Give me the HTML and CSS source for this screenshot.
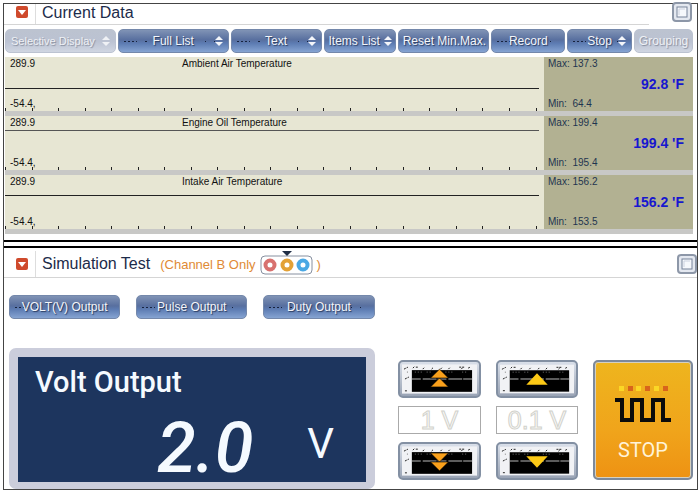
FILE: index.html
```html
<!DOCTYPE html>
<html lang="en">
<head>
    <meta charset="utf-8">
    <title>Current Data</title>
    <link rel="stylesheet" href="styles.css">
</head>
<body>
    <svg class="defs" aria-hidden="true">
        <symbol id="collapse" viewBox="0 0 12 12">
            <rect width="12" height="12" rx="2" fill="#cf4a2c"/>
            <path d="M2 4h8L6 9z" fill="#fff"/>
        </symbol>
        <symbol id="updown" viewBox="0 0 8 12">
            <path d="M4 1L8 5H0zM0 7h8L4 11z" fill="currentColor"/>
        </symbol>
        <symbol id="window" viewBox="0 0 20 20">
            <rect x="1" y="1" width="18" height="18" rx="3" fill="#e4e8f0" stroke="#8d97a8" stroke-width="2"/>
            <rect x="5" y="5" width="10" height="10" fill="#f6f8fc" stroke="#77839a"/>
            <path d="M7 13V7h6" fill="none" stroke="#ccd2e0"/>
        </symbol>
        <symbol id="ticks" viewBox="0 0 539 3" preserveAspectRatio="none">
            <path d="M0 0h1v3h-1zM27 0h1v3h-1zM53 0h1v3h-1zM80 0h1v3h-1zM106 0h1v3h-1zM133 0h1v3h-1zM159 0h1v3h-1zM186 0h1v3h-1zM212 0h1v3h-1zM239 0h1v3h-1zM265 0h1v3h-1zM292 0h1v3h-1zM318 0h1v3h-1zM345 0h1v3h-1zM371 0h1v3h-1zM398 0h1v3h-1zM424 0h1v3h-1zM451 0h1v3h-1zM477 0h1v3h-1zM504 0h1v3h-1zM531 0h1v3h-1z" fill="#222"/>
        </symbol>
        <!-- speckled key face behind the step arrows -->
        <symbol id="keyface" viewBox="0 0 76 30">
            <rect width="76" height="30" fill="#f1f2f5"/>
            <rect x="10" y="6" width="61" height="22" fill="#000"/>
            <path d="M10 15h61" stroke="#bbb" stroke-dasharray="9 2 14 1"/>
            <path d="M2 5l4-2M3 15l4-2M11 4l2-2M14 3h3M21 5l2-2M30 5l2-2M39 5l2-2M47 5l2-2M58 3h5M60 5l2-2M67 4l2-1M3 27h2" stroke="#222" stroke-dasharray="2 1"/>
            <path d="M5 8h3M13 8h7M25 8h6M44 8h7M61 8h6" stroke="#777" stroke-dasharray="1 2"/>
        </symbol>
    </svg>

    <main class="screen">
        <section class="panel">
            <header class="panel-head data-head">
                <span class="toggle"><svg width="12" height="12"><use href="#collapse"/></svg></span>
                <h2>Current Data</h2>
                <svg class="window" width="20" height="20"><use href="#window"/></svg>
            </header>
            <hr class="rule short">

            <nav class="toolbar">
                <button class="btn start small" disabled><span>Selective Display</span><svg width="8" height="12"><use href="#updown"/></svg></button>
                <button class="btn"><span>Full List</span><svg width="8" height="12"><use href="#updown"/></svg></button>
                <button class="btn"><span>Text</span><svg width="8" height="12"><use href="#updown"/></svg></button>
                <button class="btn start plain"><span>Items List</span><svg width="8" height="12"><use href="#updown"/></svg></button>
                <button class="btn plain"><span>Reset Min.Max.</span></button>
                <button class="btn"><span>Record</span></button>
                <button class="btn"><span>Stop</span><svg width="8" height="12"><use href="#updown"/></svg></button>
                <button class="btn" disabled><span>Grouping</span></button>
            </nav>

            <div class="rows">
                <div class="row">
                    <div class="chart">
                        <span>289.9</span><span class="name">Ambient Air Temperature</span>
                        <span class="low">-54.4,</span>
                        <svg class="plot"><path d="M0 31h534" stroke="#222"/></svg>
                        <svg class="ticks"><use href="#ticks"/></svg>
                    </div>
                    <div class="reading">
                        <span>Max: 137.3</span>
                        <strong>92.8 'F</strong>
                        <span>Min: &nbsp;64.4</span>
                    </div>
                </div>
                <div class="row">
                    <div class="chart">
                        <span>289.9</span><span class="name">Engine Oil Temperature</span>
                        <span class="low">-54.4,</span>
                        <svg class="plot"><path d="M0 14h534" stroke="#555"/></svg>
                        <svg class="ticks"><use href="#ticks"/></svg>
                    </div>
                    <div class="reading">
                        <span>Max: 199.4</span>
                        <strong>199.4 'F</strong>
                        <span>Min: &nbsp;195.4</span>
                    </div>
                </div>
                <div class="row">
                    <div class="chart">
                        <span>289.9</span><span class="name">Intake Air Temperature</span>
                        <span class="low">-54.4,</span>
                        <svg class="plot"><path d="M0 20h534" stroke="#222"/></svg>
                        <svg class="ticks"><use href="#ticks"/></svg>
                    </div>
                    <div class="reading">
                        <span>Max: 156.2</span>
                        <strong>156.2 'F</strong>
                        <span>Min: &nbsp;153.5</span>
                    </div>
                </div>
            </div>
        </section>

        <section class="panel simulation">
            <header class="panel-head">
                <span class="toggle"><svg width="12" height="12"><use href="#collapse"/></svg></span>
                <h2>Simulation Test</h2>
                <span class="channel">(Channel B Only
                    <svg width="53" height="24" viewBox="0 0 53 24">
                        <rect x="1" y="5" width="51" height="18" rx="4" fill="#fff" stroke="#8790a0"/>
                        <path d="M22 0h10l-5 5z" fill="#1f2d45"/>
                        <g fill="#fff" stroke-width="4">
                            <circle cx="10" cy="14" r="4.5" stroke="#d8716f"/>
                            <circle cx="27" cy="14" r="4.5" stroke="#e3a136"/>
                            <circle cx="43" cy="14" r="4.5" stroke="#4aa8e4"/>
                        </g>
                    </svg>)</span>
                <svg class="window" width="20" height="20"><use href="#window"/></svg>
            </header>
            <hr class="rule">

            <nav class="outputs">
                <button class="btn"><span>VOLT(V) Output</span></button>
                <button class="btn"><span>Pulse Output</span></button>
                <button class="btn"><span>Duty Output</span></button>
            </nav>

            <div class="controls">
                <div class="display">
                    <h3>Volt Output</h3>
                    <div class="value"><span class="digits">2.0</span><span class="unit">V</span></div>
                </div>

                <div class="stepper">
                    <button class="key" aria-label="Up 1 V">
                        <svg viewBox="0 0 76 30"><use href="#keyface"/><path d="M38 5L47 14H29zM38 14L47 23H29z" fill="#f9a01b" stroke="#000" stroke-width=".6"/></svg>
                    </button>
                    <input type="text" value="1 V" aria-label="Coarse step" readonly>
                    <button class="key" aria-label="Down 1 V">
                        <svg viewBox="0 0 76 30"><use href="#keyface"/><path d="M29 16H47L38 25zM29 7H47L38 16z" fill="#f9a01b" stroke="#000" stroke-width=".6"/></svg>
                    </button>
                </div>

                <div class="stepper">
                    <button class="key" aria-label="Up 0.1 V">
                        <svg viewBox="0 0 76 30"><use href="#keyface"/><path d="M38 9L49 21H27z" fill="#fcc916"/></svg>
                    </button>
                    <input type="text" value="0.1 V" aria-label="Fine step" readonly>
                    <button class="key" aria-label="Down 0.1 V">
                        <svg viewBox="0 0 76 30"><use href="#keyface"/><path d="M27 10H49L38 22z" fill="#fcc916"/></svg>
                    </button>
                </div>

                <button class="stop">
                    <svg width="60" height="42" viewBox="0 0 60 42">
                        <g fill="#fbd726"><path d="M6 2h5v5H6zM23 2h5v5h-5zM41 2h5v5h-5z"/></g>
                        <g fill="#d8641c"><path d="M15 2h5v5h-5zM32 2h5v5h-5zM50 2h5v5h-5z"/></g>
                        <path d="M2 16h7v20h10V16h10v20h11V16h10v20h8" fill="none" stroke="#0b0b0b" stroke-width="4"/>
                    </svg>
                    <span>STOP</span>
                </button>
            </div>
        </section>
    </main>
</body>
</html>
```

FILE: styles.css
```css
* {
    box-sizing: border-box;
}
body {
    margin: 0;
    padding: 3px;
    background: #fff;
    font-family: "Liberation Sans", Arial, sans-serif;
    color: #1c2b4a;
}
h2, h3, hr {
    margin: 0;
}
.defs {
    display: none;
}
.screen {
    border: 1px solid #444;
    margin-right: -1px;
}

/* panel headers */
.panel-head {
    display: flex;
    align-items: center;
    height: 29px;
    padding-left: 12px;
}
.panel-head h2 {
    padding-left: 6px;
    font-size: 16px;
    font-weight: normal;
    line-height: 18px;
}
.toggle {
    display: flex;
    align-items: center;
    align-self: stretch;
    padding-right: 7px;
    border-right: 1px solid #ddd;
}
.window {
    margin-left: auto;
}
.simulation .panel-head {
    padding-top: 3px;
}
.data-head {
    height: 20px;
    padding-right: 5px;
}
.data-head .toggle {
    padding-bottom: 4px;
}
.data-head h2 {
    padding-bottom: 2px;
}
.data-head .window {
    align-self: flex-start;
    margin-top: -2px;
}
.channel {
    display: flex;
    align-items: center;
    gap: 4px;
    padding-left: 10px;
    color: #e08a35;
    font-size: 13px;
}
.channel svg {
    margin-bottom: 2px;
}
.rule {
    height: 1px;
    border: 0;
    background: #d5d5d5;
}
.rule.short {
    margin-right: 48px;
}

/* buttons */
.toolbar {
    display: grid;
    grid-template-columns: 111fr 111fr 91fr 73fr 91fr 74fr 65fr 59fr;
    gap: 2px;
    padding: 4px 4px 4px 1px;
}
.outputs {
    display: grid;
    grid-template-columns: repeat(3, 111fr) 306fr;
    column-gap: 16px;
    padding: 17px 0 29px 5px;
}
.btn {
    display: grid;
    grid-template-columns: minmax(0, 1fr);
    align-items: center;
    justify-items: center;
    min-width: 0;
    height: 24px;
    padding: 0 5px;
    border: 1px solid #7488ab;
    border-radius: 5px;
    background: linear-gradient(#8093b5, #586f9f 45%, #5c7bb2 60%, #86a4d2);
    color: #f4f6fa;
    font: 12px "Liberation Sans", Arial, sans-serif;
    text-shadow: 1px 1px 1px #2b3c60;
    white-space: nowrap;
}
.btn > *, .btn::before {
    grid-area: 1 / 1;
}
.btn svg {
    justify-self: end;
}
.btn.start {
    justify-items: start;
}
.btn.small {
    font-size: 11px;
}
.btn::before {
    content: "";
    justify-self: stretch;
    height: 1px;
    background:
        repeating-linear-gradient(90deg, #17233f 0 2px, transparent 2px 4px) left / 13px 1px no-repeat,
        linear-gradient(#17233f, #17233f) 21px 0 / 2px 1px no-repeat,
        repeating-linear-gradient(90deg, #17233f 0 1px, transparent 1px 9px) right / 18px 1px no-repeat;
}
.btn.plain::before, .btn:disabled::before {
    display: none;
}
.btn.plain {
    padding: 0 3px 0 4px;
}
.btn:disabled {
    border-color: #bcc3d1;
    background: linear-gradient(#bcc3d0, #bbc2d2 50%, #d0d6e2);
    color: #eff1f5;
    text-shadow: 1px 1px 1px #858c9c;
}

/* live data rows */
.rows {
    padding: 0 4px 6px 1px;
    font: 10px/12px "Liberation Sans", Arial, sans-serif;
}
.row {
    display: grid;
    grid-template-columns: 539fr 149fr;
    height: 59px;
    border-bottom: 5px solid #c8c8c6;
}
.chart {
    display: grid;
    grid-template: 12px 1fr 12px / 177fr 362fr;
    padding: 1px 0;
    background: #e7e6d3;
    color: #111;
    position: relative;
}
.chart span {
    padding-left: 5px;
}
.chart .name {
    padding-left: 0;
}
.chart .low {
    grid-row: 3;
}
.plot, .ticks {
    position: absolute;
    left: 0;
    width: 100%;
}
.plot {
    top: 0;
    height: 100%;
    shape-rendering: crispEdges;
}
.ticks {
    bottom: 0;
    height: 3px;
}
.reading {
    display: flex;
    flex-direction: column;
    justify-content: space-between;
    padding: 1px 9px 1px 4px;
    background: #b2b192;
    color: #1f3550;
}
.reading strong {
    align-self: flex-end;
    color: #1717cf;
    font: bold 14px/16px "Liberation Sans", Arial, sans-serif;
}

/* simulation panel */
.panel {
    border-bottom: 2px solid #000;
}
.simulation {
    margin-top: 4px;
    border-top: 2px solid #000;
    border-bottom: 0;
}
.controls {
    display: grid;
    grid-template-columns: 374fr 83fr 82fr 100fr;
    column-gap: 15px;
    padding: 0 4px 0 5px;
}
.display {
    margin-right: 8px;
    padding: 9px 17px 0 17px;
    height: 141px;
    border: 9px solid #cbcddb;
    border-bottom-width: 7px;
    border-radius: 7px;
    background: #1d355e;
    color: #f5faff;
}
.display h3 {
    font: 500 29px/32px Roboto, "Liberation Sans", sans-serif;
}
.value {
    display: grid;
    grid-template-columns: 235fr 80fr;
    line-height: 100px;
}
.digits {
    justify-self: end;
    padding-right: 16px;
    font-family: Roboto, "Liberation Sans", sans-serif;
    font-size: 70px;
    font-style: italic;
    font-weight: 500;
}
.unit {
    padding-left: 38px;
    font-family: Roboto, "Liberation Sans", sans-serif;
    font-size: 42px;
    line-height: 92px;
}
.stepper {
    display: flex;
    flex-direction: column;
    justify-content: space-between;
    margin: 12px 0 9px;
}
.key {
    height: 38px;
    padding: 2px;
    border: 2px solid #8390a3;
    border-radius: 5px;
    background: linear-gradient(#d9dfe9, #9aa4b5);
}
.key svg {
    display: block;
    width: 100%;
    height: 30px;
}
.stepper input {
    width: 100%;
    height: 28px;
    padding: 0;
    border: 1px solid #aaa;
    background: #fff;
    color: #fafaf8;
    font: 25px "Liberation Sans", Arial, sans-serif;
    text-align: center;
    -webkit-text-stroke: 1px #d2d2cc;
}
.stop {
    display: flex;
    flex-direction: column;
    align-items: center;
    justify-content: center;
    gap: 12px;
    margin: 12px 0 9px;
    padding: 5px 0 0;
    border: 2px solid #7c899c;
    border-radius: 5px;
    background: linear-gradient(#eeb51e, #f0a41b 60%, #ee9213);
    box-shadow: inset 0 0 0 1px #d5d0c0;
    color: #fff3d8;
    font: 20px/24px Roboto, "Liberation Sans", sans-serif;
}
```
